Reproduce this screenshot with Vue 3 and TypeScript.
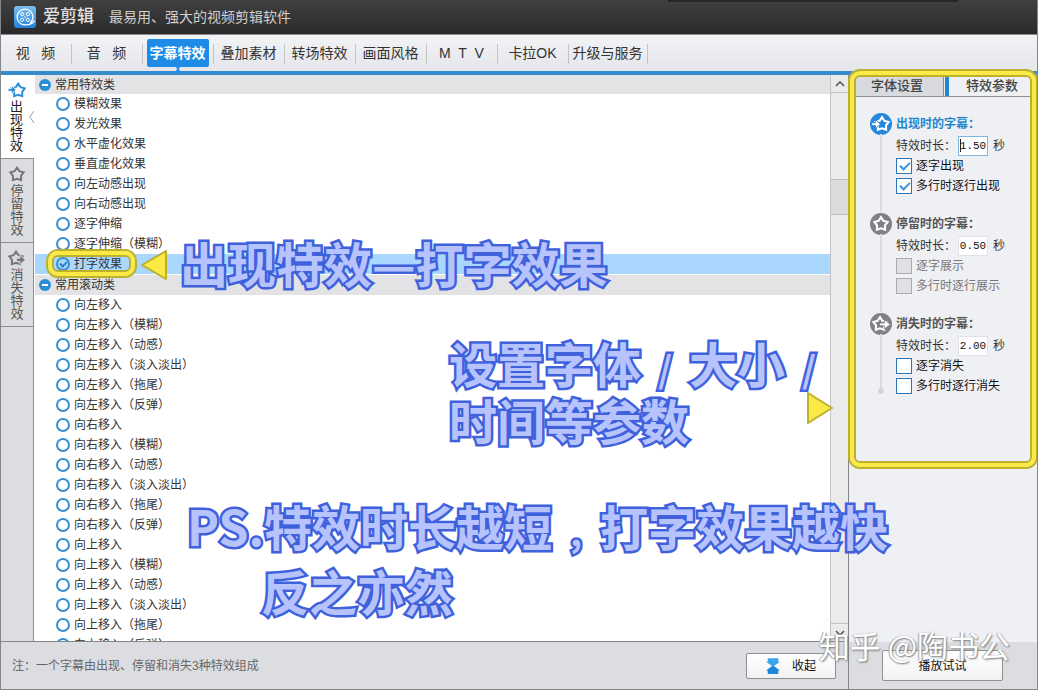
<script setup lang="ts">
import { ref } from 'vue'

interface EffectGroup {
  name: string
  items: string[]
}

interface ParamSection {
  key: 'in' | 'stay' | 'out'
  title: string
  seconds: string
  options: { label: string; checked: boolean }[]
  active: boolean
  disabled: boolean
}

const STAR = 'M8 1.6 L10.4 5.2 L14.6 6.4 L12 9.8 L12.1 14.1 L8 12.7 L3.9 14.1 L4 9.8 L1.4 6.4 L5.6 5.2 Z'

const menu = ['视 \u00a0 频', '音 \u00a0 频', '字幕特效', '叠加素材', '转场特效', '画面风格', 'M\u00a0 T\u00a0 V', '卡拉OK', '升级与服务']
const activeMenu = ref(2)

const stages = [
  { key: 'in', label: '出现特效' },
  { key: 'stay', label: '停留特效' },
  { key: 'out', label: '消失特效' },
]
const activeStage = ref('in')

const groups: EffectGroup[] = [
  {
    name: '常用特效类',
    items: ['模糊效果', '发光效果', '水平虚化效果', '垂直虚化效果', '向左动感出现', '向右动感出现', '逐字伸缩', '逐字伸缩（模糊）', '打字效果'],
  },
  {
    name: '常用滚动类',
    items: [
      '向左移入', '向左移入（模糊）', '向左移入（动感）', '向左移入（淡入淡出）', '向左移入（拖尾）', '向左移入（反弹）',
      '向右移入', '向右移入（模糊）', '向右移入（动感）', '向右移入（淡入淡出）', '向右移入（拖尾）', '向右移入（反弹）',
      '向上移入', '向上移入（模糊）', '向上移入（动感）', '向上移入（淡入淡出）', '向上移入（拖尾）', '向上移入（反弹）',
    ],
  },
]
const selected = ref('打字效果')

const sections = ref<ParamSection[]>([
  {
    key: 'in', title: '出现时的字幕：', seconds: '1.50', active: true, disabled: false,
    options: [{ label: '逐字出现', checked: true }, { label: '多行时逐行出现', checked: true }],
  },
  {
    key: 'stay', title: '停留时的字幕：', seconds: '0.50', active: false, disabled: true,
    options: [{ label: '逐字展示', checked: false }, { label: '多行时逐行展示', checked: false }],
  },
  {
    key: 'out', title: '消失时的字幕：', seconds: '2.00', active: false, disabled: false,
    options: [{ label: '逐字消失', checked: false }, { label: '多行时逐行消失', checked: false }],
  },
])
</script>

<template>
  <div class="window">
    <header class="titlebar">
      <svg class="logo" viewBox="0 0 22 22" aria-hidden="true">
        <defs>
          <linearGradient id="logoFill" x1="0" y1="0" x2="0" y2="1">
            <stop offset="0" stop-color="#7cc0f2" />
            <stop offset="1" stop-color="#2280dc" />
          </linearGradient>
        </defs>
        <rect width="22" height="22" rx="3" fill="url(#logoFill)" />
        <path d="M20.6 14.6 C18.8 17.4 16 18.9 11 18.9 A7.9 7.9 0 1 1 18.9 11 C18.9 13.5 17.8 15.6 16 16.8" fill="none" stroke="#fff" stroke-width="1.3" />
        <g fill="none" stroke="#fff" stroke-width="1">
          <circle cx="8.2" cy="8.2" r="1.6" />
          <circle cx="13.8" cy="8.2" r="1.6" />
          <circle cx="8.2" cy="13.8" r="1.6" />
          <circle cx="13.8" cy="13.8" r="1.6" />
        </g>
        <circle cx="11" cy="11" r="0.8" fill="#fff" />
      </svg>
      <h1>爱剪辑</h1>
      <p>最易用、强大的视频剪辑软件</p>
    </header>

    <nav class="menu">
      <div v-for="(item, i) in menu" :key="item" class="menu-cell" :class="{ last: i === menu.length - 1 }">
        <button type="button" :class="{ on: i === activeMenu }" @click="activeMenu = i">{{ item }}</button>
        <svg v-if="i === activeMenu" class="neck" viewBox="0 0 12 6" aria-hidden="true">
          <path d="M0 0 H12 Q7 1 7 3 Q7 5 10 6 H2 Q5 5 5 3 Q5 1 0 0 Z" fill="#1e8ce6" />
        </svg>
      </div>
    </nav>

    <div class="body">
      <main class="left">
        <div class="work">
          <div class="stages">
            <button
              v-for="s in stages"
              :key="s.key"
              type="button"
              class="stage"
              :class="{ on: s.key === activeStage }"
              @click="activeStage = s.key"
            >
              <svg class="stage-icon" viewBox="0 0 18 16" aria-hidden="true">
                <g v-if="s.key === 'in'">
                  <path :d="STAR" transform="translate(2.2 0)" fill="none" stroke="currentColor" stroke-width="2" />
                  <path d="M0 6.4 H3.4 V3.4 L8.2 7.8 L3.4 12.2 V9.2 H0 Z" fill="currentColor" stroke="#fff" stroke-width="0.9" />
                </g>
                <path v-else-if="s.key === 'stay'" :d="STAR" transform="translate(1 0)" fill="none" stroke="currentColor" stroke-width="2" />
                <g v-else>
                  <path :d="STAR" fill="none" stroke="currentColor" stroke-width="2" />
                  <path d="M8.4 8.2 H12 V5.2 L17.5 9.8 L12 14.4 V11.4 H8.4 Z" fill="currentColor" stroke="#dcdde0" stroke-width="0.9" />
                </g>
              </svg>
              <span>{{ s.label }}</span>
              <svg v-if="s.key === activeStage" class="notch" viewBox="0 0 5 12" aria-hidden="true">
                <path d="M5 0 L0.8 6 L5 12" fill="#fff" stroke="#999" />
              </svg>
            </button>
          </div>

          <div class="effects">
            <section v-for="g in groups" :key="g.name" class="group">
              <button type="button" class="group-head">
                <svg viewBox="0 0 12 12" aria-hidden="true">
                  <circle cx="6" cy="6" r="6" fill="#2b8fd8" />
                  <rect x="3" y="5" width="6" height="2" fill="#fff" />
                </svg>
                {{ g.name }}
              </button>
              <label v-for="name in g.items" :key="name" class="effect" :class="{ picked: name === selected }">
                <input v-model="selected" type="radio" name="effect" :value="name" />
                <span>{{ name }}</span>
              </label>
            </section>
          </div>

          <div class="scroll">
            <button type="button" class="step" aria-label="向上滚动">
              <svg viewBox="0 0 10 6"><path d="M1 5 L5 1 L9 5" fill="none" stroke="#555" stroke-width="1.6" /></svg>
            </button>
            <div class="track"><div class="thumb"></div></div>
            <button type="button" class="step" aria-label="向下滚动">
              <svg viewBox="0 0 10 6"><path d="M1 1 L5 5 L9 1" fill="none" stroke="#555" stroke-width="1.6" /></svg>
            </button>
          </div>
        </div>

        <footer class="foot">
          <p>注：一个字幕由出现、停留和消失3种特效组成</p>
          <button type="button" class="push fold">
            <svg viewBox="0 0 16 18" aria-hidden="true">
              <path d="M2 0 H14 V4 H16 L9 9 H7 L0 4 H2 Z" fill="#3aa5ea" />
              <path d="M7 9 H9 L16 14 H14 V18 H2 V14 H0 Z" fill="#1f86dc" />
            </svg>
            收起
          </button>
        </footer>
      </main>

      <aside class="side">
        <div class="side-tabs">
          <button type="button">字体设置</button>
          <button type="button" class="on">特效参数</button>
        </div>
        <div class="params">
          <fieldset v-for="(s, i) in sections" :key="s.key" class="param" :class="{ active: s.active }">
            <div class="rail">
              <svg class="badge" viewBox="0 0 22 22" aria-hidden="true">
                <circle cx="11" cy="11" r="11" fill="currentColor" />
                <path :d="STAR" :transform="s.key === 'in' ? 'translate(4 2.6)' : s.key === 'out' ? 'translate(2 2.6)' : 'translate(3 2.6)'" fill="none" stroke="#fff" stroke-width="2.1" />
                <path v-if="s.key === 'in'" d="M1.5 9.8 H5.4 V6.6 L10.6 11.2 L5.4 15.8 V12.6 H1.5 Z" fill="#fff" stroke="currentColor" stroke-width="0.9" />
                <path v-if="s.key === 'out'" d="M9.5 10 H14.4 V6.8 L20.4 11.4 L14.4 16 V12.8 H9.5 Z" fill="#fff" stroke="currentColor" stroke-width="0.9" />
              </svg>
            </div>
            <div class="fields">
              <h2>{{ s.title }}</h2>
              <div class="duration">
                <label :for="'sec-' + s.key">特效时长：</label>
                <span class="box">
                  <input :id="'sec-' + s.key" v-model="s.seconds" type="text" />
                  <i v-if="i === 0" class="caret"></i>
                </span>
                <span>秒</span>
              </div>
              <label v-for="o in s.options" :key="o.label" class="tick">
                <input v-model="o.checked" type="checkbox" :disabled="s.disabled" />
                <span>{{ o.label }}</span>
              </label>
            </div>
          </fieldset>
        </div>
        <div class="side-foot">
          <button type="button" class="push play">播放试试</button>
        </div>
      </aside>
    </div>

    <div class="notes">
      <div class="ring ring-effect"></div>
      <div class="ring ring-panel"></div>
      <svg class="arrow arrow-left" viewBox="0 0 28 32" aria-hidden="true">
        <path d="M2 16 L26 2 V30 Z" fill="#fbea45" stroke="#bdb02c" stroke-width="2" stroke-linejoin="round" />
      </svg>
      <svg class="arrow arrow-right" viewBox="0 0 28 32" aria-hidden="true">
        <path d="M26 16 L2 1 V31 Z" fill="#fbea45" stroke="#bdb02c" stroke-width="2" stroke-linejoin="round" />
      </svg>
      <p class="note note-type">出现特效—打字效果</p>
      <p class="note note-font">设置字体<span>/</span>大小<span>/</span><br />时间等参数</p>
      <p class="note note-ps">PS.特效时长越短<span>,</span>打字效果越快</p>
      <p class="note note-then">反之亦然</p>
      <p class="watermark">知乎 @陶书公</p>
    </div>
  </div>
</template>

<style>
body {
  margin: 0;
}
</style>

<style scoped>
.window {
  position: relative;
  display: flex;
  flex-direction: column;
  box-sizing: border-box;
  height: 100vh;
  overflow: hidden;
  border: solid #85868a;
  border-width: 0 1px 1px;
  background: #eff0f3;
  color: #333;
  font: 12px/20px "Liberation Sans", "Noto Sans CJK SC", sans-serif;
}
h1, h2, p {
  margin: 0;
}
button, input {
  margin: 0;
  padding: 0;
  border: 0;
  background: none;
  color: inherit;
  font: inherit;
}

.titlebar {
  position: relative;
  display: flex;
  align-items: center;
  flex: none;
  box-sizing: border-box;
  height: 35px;
  margin: 0 -1px;
  padding-left: 14px;
  border-bottom: 1px solid #8c8c8e;
  background: linear-gradient(#404040, #2a2a2a);
  color: #e2e2e2;
}
.titlebar::after {
  content: "";
  position: absolute;
  top: 0;
  right: 80px;
  width: 290px;
  height: 2px;
  background: #262626;
}
.logo {
  width: 22px;
  height: 22px;
}
h1 {
  margin-left: 7px;
  font-size: 17px;
  font-weight: 500;
}
.titlebar p {
  margin-left: 15px;
  font-size: 14px;
  color: #d0d0d0;
}

.menu {
  display: flex;
  align-items: flex-start;
  flex: none;
  box-sizing: border-box;
  height: 40px;
  border-bottom: 4px solid #348ccd;
  background: linear-gradient(#f2f3f5, #e5e6ea);
}
.menu-cell {
  position: relative;
  display: flex;
  justify-content: center;
  box-sizing: border-box;
  width: 71px;
  height: 36px;
  padding: 4px 2px 0 0;
}
.menu-cell::after {
  content: "";
  position: absolute;
  right: 0;
  top: 9px;
  width: 1px;
  height: 20px;
  background: #c3c4c8;
}
.menu-cell.last {
  width: 79px;
}
.menu button {
  height: 28px;
  padding: 0 3px;
  border-radius: 2px;
  font-size: 14px;
  white-space: nowrap;
}
.menu button.on {
  background: #1e8ce6;
  color: #fff;
  font-weight: 700;
}
.neck {
  position: absolute;
  left: 29px;
  bottom: -1px;
  width: 12px;
  height: 6px;
}

.body {
  display: flex;
  flex: 1;
  min-height: 0;
}
.left {
  display: flex;
  flex-direction: column;
  flex: 1;
  min-width: 0;
}
.work {
  display: flex;
  flex: 1;
  min-height: 0;
  border-bottom: 1px solid #85868a;
}
.stages {
  flex: none;
  box-sizing: border-box;
  width: 33px;
  border-right: 1px solid #8d8e92;
  background: #dcdde0;
}
.stage {
  position: relative;
  display: flex;
  flex-direction: column;
  align-items: center;
  gap: 2px;
  box-sizing: border-box;
  width: 32px;
  height: 84px;
  padding-top: 7px;
  border-bottom: 1px solid #8d8e92;
  color: #555;
}
.stage.on {
  width: 33px;
  padding-right: 2px;
  background: #fff;
  color: #222;
}
.stage-icon {
  width: 18px;
  height: 16px;
  color: #777;
}
.stage.on .stage-icon {
  color: #2b8fd8;
}
.stage span {
  width: 13px;
  font-size: 13px;
  line-height: 13px;
  overflow-wrap: anywhere;
}
.notch {
  position: absolute;
  right: 0;
  top: 36px;
  width: 5px;
  height: 12px;
}

.effects {
  flex: 1;
  min-width: 0;
  overflow: hidden;
  padding-left: 1px;
  background: #fff;
}
.group + .group {
  margin-top: 1px;
}
.group-head {
  display: flex;
  align-items: center;
  gap: 4px;
  width: 100%;
  height: 20px;
  padding-left: 4px;
  background: #e3e3e5;
}
.group:first-child .group-head {
  height: 19px;
}
.group-head svg {
  width: 12px;
  height: 12px;
}
.effect {
  display: flex;
  align-items: center;
  gap: 4px;
  height: 20px;
  padding-left: 21px;
}
.effect.picked {
  background: #a9d7fd;
}
.effect input {
  position: relative;
  appearance: none;
  box-sizing: border-box;
  width: 14px;
  height: 14px;
  border: 2px solid #3b8fd0;
  border-radius: 50%;
}
.effect input:checked::after {
  content: "";
  position: absolute;
  left: 3px;
  top: 1px;
  width: 3px;
  height: 5px;
  border: solid #2b80c8;
  border-width: 0 2px 2px 0;
  transform: rotate(45deg);
}

.scroll {
  display: flex;
  flex-direction: column;
  flex: none;
  box-sizing: border-box;
  width: 18px;
  border-left: 1px solid #c4c4c6;
  background: #ebebec;
}
.step {
  display: flex;
  align-items: center;
  justify-content: center;
  height: 18px;
  border-bottom: 1px solid #c4c4c6;
}
.step:last-child {
  border-top: 1px solid #c4c4c6;
  border-bottom: 0;
}
.step svg {
  width: 10px;
  height: 6px;
}
.track {
  flex: 1;
  padding-top: 86px;
}
.thumb {
  height: 34px;
  border: solid #bdbec0;
  border-width: 1px 0;
  background: #dcdcde;
}

.foot, .side-foot {
  display: flex;
  align-items: center;
  justify-content: space-between;
  flex: none;
  box-sizing: border-box;
  height: 47px;
  padding: 0 12px 0 11px;
  background: #dcdde0;
}
.foot p {
  color: #666;
}
.push {
  display: flex;
  align-items: center;
  justify-content: center;
  border: 1px solid #8f9094;
  border-radius: 2px;
  background: linear-gradient(#fff, #f2f2f3);
  color: #111;
}
.fold {
  gap: 12px;
  width: 90px;
  height: 26px;
}
.fold svg {
  width: 14px;
  height: 18px;
}

.side {
  display: flex;
  flex-direction: column;
  flex: none;
  box-sizing: border-box;
  width: 189px;
  border-left: 1px solid #85868a;
}
.side-tabs {
  display: flex;
  flex: none;
  height: 21px;
  padding-left: 6px;
  border-bottom: 1px solid #8d8e92;
}
.side-tabs button {
  width: 89px;
  padding-right: 4px;
  border-right: 1px solid #8d8e92;
  background: #d9dadd;
  color: #444;
  font-size: 13px;
  font-weight: 500;
}
.side-tabs button.on {
  flex: 1;
  margin-left: 1px;
  padding-right: 2px;
  border-left: 4px solid #2487cd;
  border-right: 0;
  background: #eff0f3;
}
.params {
  flex: 1;
  padding: 15px 0 0 21px;
}
.param {
  display: flex;
  gap: 4px;
  min-width: 0;
  height: 100px;
  margin: 0;
  padding: 0;
  border: 0;
  color: #333;
}
.rail {
  position: relative;
  width: 22px;
  color: #808184;
}
.rail::before {
  content: "";
  position: absolute;
  left: 10px;
  top: 22px;
  bottom: 0;
  width: 2px;
  background: #dadbdf;
}
.param:last-child .rail::before {
  bottom: 22px;
}
.param:last-child .rail::after {
  content: "";
  position: absolute;
  left: 8px;
  bottom: 18px;
  width: 6px;
  height: 6px;
  border-radius: 50%;
  background: #d3d4d8;
}
.param.active .rail {
  color: #2487dc;
}
.badge {
  display: block;
  margin-top: 1px;
  width: 22px;
  height: 22px;
}
.fields {
  flex: 1;
}
h2 {
  height: 24px;
  color: #555;
  font-size: 12px;
  font-weight: 700;
  line-height: 24px;
}
.active h2 {
  color: #2487cd;
}
.duration {
  display: flex;
  align-items: center;
  height: 20px;
}
.duration label {
  width: 62px;
}
.box {
  position: relative;
  width: 30px;
  height: 20px;
  margin-right: 5px;
}
.box input {
  display: block;
  box-sizing: border-box;
  width: 30px;
  height: 20px;
  border: 1px solid #e2e2e6;
  background: #fff;
  color: #111;
  font: 11px/18px "Liberation Mono", monospace;
  text-align: center;
}
.active .box input {
  border-color: #82b6e0;
}
.caret {
  position: absolute;
  left: 2px;
  top: 3px;
  width: 1px;
  height: 13px;
  background: #222;
}
.tick {
  display: flex;
  align-items: center;
  gap: 4px;
  height: 21px;
  color: #111;
}
.duration + .tick {
  height: 19px;
}
.tick input {
  position: relative;
  appearance: none;
  box-sizing: border-box;
  width: 16px;
  height: 16px;
  border: 1px solid #2a78b8;
  background: #fff;
}
.tick input:checked::after {
  content: "";
  position: absolute;
  left: 5px;
  top: 1px;
  width: 4px;
  height: 8px;
  border: solid #3d93dc;
  border-width: 0 2px 2px 0;
  transform: rotate(45deg);
}
.tick input:disabled {
  border-color: #a9aaad;
  background: #e0e1e4;
}
.tick input:disabled + span {
  color: #777;
}
.side-foot {
  padding: 0 33px;
}
.play {
  width: 121px;
  height: 31px;
}

.notes {
  position: absolute;
  inset: 0 -1px -1px;
  pointer-events: none;
}
.ring {
  position: absolute;
  box-sizing: border-box;
  border: 2px solid #bdb02c;
  border-radius: 12px;
}
.ring::before {
  content: "";
  position: absolute;
  inset: 0;
  border: 4px solid #fbea45;
  border-radius: 10px;
}
.ring::after {
  content: "";
  position: absolute;
  inset: 4px;
  border: 2px solid #bdb02c;
  border-radius: 6px;
}
.ring-effect {
  left: 46px;
  top: 249px;
  width: 91px;
  height: 29px;
}
.ring-panel {
  right: 0;
  top: 69px;
  width: 190px;
  height: 400px;
}
.arrow {
  position: absolute;
  width: 28px;
  height: 32px;
}
.arrow-left {
  left: 140px;
  top: 249px;
}
.arrow-right {
  right: 204px;
  top: 392px;
}
.note {
  position: absolute;
  color: #b7c3fc;
  font: 700 48px/56px "Noto Sans CJK SC", sans-serif;
  white-space: nowrap;
  -webkit-text-stroke: 5px #3f61dc;
  stroke-linejoin: round;
  paint-order: stroke fill;
}
.note span {
  display: inline-block;
  width: 48px;
  font-size: 36px;
  line-height: 48px;
  text-align: center;
}
.note-type {
  left: 180px;
  top: 234px;
}
.note-font {
  left: 449px;
  top: 334px;
}
.note-ps {
  left: 187px;
  top: 497px;
}
.note-then {
  left: 261px;
  top: 562px;
}
.watermark {
  position: absolute;
  right: 28px;
  bottom: 25px;
  color: #fff;
  font: 31px/40px "Noto Sans CJK SC", sans-serif;
  text-shadow: 1px 1px 2px #777, -1px 0 1px #aaa;
  white-space: nowrap;
}
</style>
